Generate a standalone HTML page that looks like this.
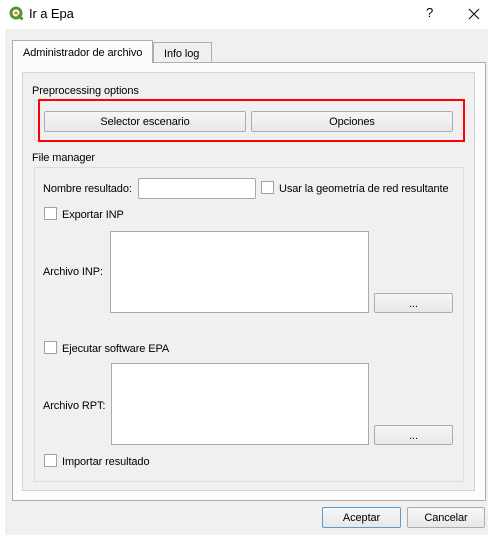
<!DOCTYPE html>
<html><head><style>
*{box-sizing:border-box;margin:0;padding:0}
body{width:493px;height:539px;background:#fff;font-family:"Liberation Sans",sans-serif;font-size:11px;letter-spacing:-0.1px;color:#000;position:relative;overflow:hidden}
.a{position:absolute;white-space:nowrap}
.t{margin-top:1px}
.btn{position:absolute;border:1px solid #adadad;border-radius:2px;background:linear-gradient(#f6f6f6,#e8e8e8);text-align:center;line-height:20px;white-space:nowrap}
.cb{position:absolute;width:13px;height:13px;border:1px solid #a0a0a0;background:#fff}
.ta{position:absolute;border:1px solid #a9a9a9;background:#fff}
</style></head><body>
<svg class="a" style="left:9px;top:6px" width="15" height="15" viewBox="0 0 15 15"><circle cx="7" cy="7" r="5" fill="none" stroke="#589632" stroke-width="3"/><path d="M9 9 L13.5 13.5" stroke="#589632" stroke-width="3"/><circle cx="7" cy="7" r="1.6" fill="#ee7913"/></svg>
<div class="a" style="left:29px;top:6px;font-size:13px">Ir a Epa</div>
<div class="a" style="left:426px;top:5px;font-size:13px">?</div>
<svg class="a" style="left:468px;top:8px" width="12" height="12"><path d="M1 1L11 11M11 1L1 11" stroke="#000" stroke-width="1"/></svg>
<div class="a" style="left:5px;top:29px;width:483px;height:506px;background:#f0f0f0"></div>
<div class="a" style="left:12px;top:62px;width:474px;height:439px;border:1px solid #adadad;background:#fcfcfc"></div>
<div class="a" style="left:12px;top:40px;width:141px;height:23px;border:1px solid #adadad;border-bottom:none;background:#fcfcfc;padding:6px 0 0 10px">Administrador de archivo</div>
<div class="a" style="left:153px;top:42px;width:59px;height:20px;border:1px solid #adadad;border-bottom:none;background:#f0f0f0;padding:5px 0 0 10px">Info log</div>
<div class="a" style="left:22px;top:72px;width:453px;height:419px;border:1px solid #d5d5d5;background:#f0f0f0"></div>
<div class="a t" style="left:32px;top:84px">Preprocessing options</div>
<div class="a" style="left:34px;top:100px;width:430px;height:41px;border:1px solid #dcdcdc"></div>
<div class="a" style="left:38px;top:99px;width:427px;height:43px;border:2px solid #ff0000"></div>
<div class="btn" style="left:44px;top:111px;width:202px;height:21px">Selector escenario</div>
<div class="btn" style="left:251px;top:111px;width:202px;height:21px">Opciones</div>
<div class="a t" style="left:32px;top:151px">File manager</div>
<div class="a" style="left:34px;top:167px;width:430px;height:315px;border:1px solid #dcdcdc"></div>
<div class="a t" style="left:43px;top:182px">Nombre resultado:</div>
<div class="ta" style="left:138px;top:178px;width:118px;height:21px;border-radius:2px"></div>
<div class="cb" style="left:261px;top:181px"></div>
<div class="a t" style="left:279px;top:182px">Usar la geometría de red resultante</div>
<div class="cb" style="left:44px;top:207px"></div>
<div class="a t" style="left:62px;top:208px">Exportar INP</div>
<div class="ta" style="left:110px;top:231px;width:259px;height:82px"></div>
<div class="a t" style="left:43px;top:265px">Archivo INP:</div>
<div class="btn" style="left:374px;top:293px;width:79px;height:20px">...</div>
<div class="cb" style="left:44px;top:341px"></div>
<div class="a t" style="left:62px;top:342px">Ejecutar software EPA</div>
<div class="ta" style="left:111px;top:363px;width:258px;height:82px"></div>
<div class="a t" style="left:43px;top:399px">Archivo RPT:</div>
<div class="btn" style="left:374px;top:425px;width:79px;height:20px">...</div>
<div class="cb" style="left:44px;top:454px"></div>
<div class="a t" style="left:62px;top:455px">Importar resultado</div>
<div class="btn" style="left:322px;top:507px;width:79px;height:21px;border-color:#5b9bd5">Aceptar</div>
<div class="btn" style="left:407px;top:507px;width:78px;height:21px">Cancelar</div>
</body></html>
